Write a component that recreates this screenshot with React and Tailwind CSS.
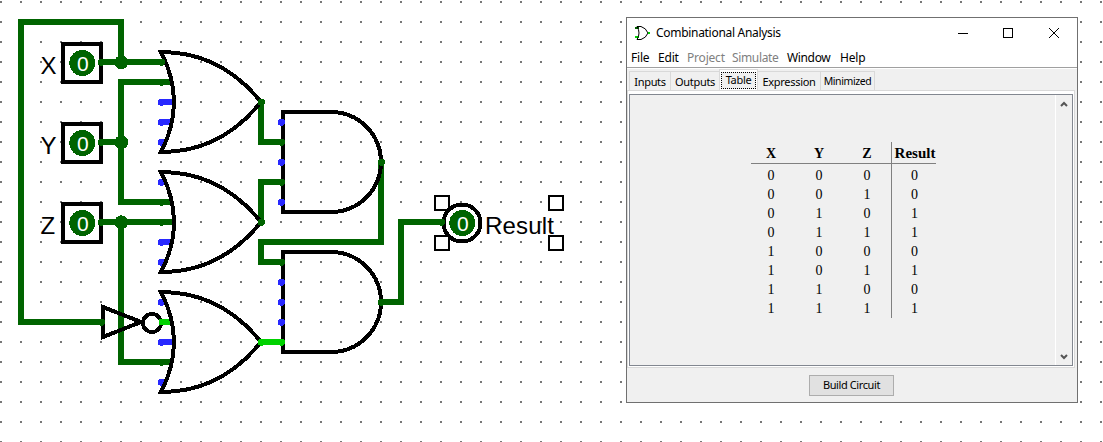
const GREEN = "#006400";
const LIME = "#00d200";
const BLUE = "#2828ff";

function Pin({ x, y, color = GREEN, r = 3.6 }) {
  return <circle cx={x + 0.3} cy={y + 0.2} r={r} fill={color} />;
}

function OrGate({ y, stubs, ports }) {
  return (
    <g>
      {stubs.map(([dy, len]) => (
        <path key={dy} d={`M161 ${y + dy}h${len}`} stroke={BLUE} strokeWidth="6" />
      ))}
      {ports.map((dy) => (
        <Pin key={dy} x={161} y={y + dy} color={BLUE} />
      ))}
      <path
        d={`M261 ${y}Q221 ${y - 50} 161 ${y - 50}Q187 ${y} 161 ${y + 50}Q221 ${y + 50} 261 ${y}Z`}
        fill="none"
        stroke="#000"
        strokeWidth="4"
      />
    </g>
  );
}

function AndGate({ y, ports }) {
  return (
    <g>
      <path
        d={`M331 ${y - 50}H283V${y + 50}H331A50 50 0 0 0 331 ${y - 50}Z`}
        fill="none"
        stroke="#000"
        strokeWidth="4"
      />
      {ports.map((dy) => (
        <Pin key={dy} x={281} y={y + dy} color={BLUE} />
      ))}
    </g>
  );
}

function Value({ x, y }) {
  return (
    <g>
      <circle cx={x + 0.3} cy={y} r="13" fill={GREEN} />
      <text x={x + 0.9} y={y + 8} textAnchor="middle" fontSize="21" fill="#fff">
        0
      </text>
    </g>
  );
}

function InputPin({ y, label }) {
  return (
    <g>
      <rect x="63" y={y - 18} width="38" height="38" fill="none" stroke="#000" strokeWidth="4" />
      <Value x={82} y={y + 1} />
      <Pin x={101} y={y} />
      <text x="40.5" y={y + 12} fontSize="24" fill="#000">
        {label}
      </text>
    </g>
  );
}

const GREEN_PINS = [
  [101, 322], [261, 102], [261, 222], [281, 142], [281, 182], [381, 162], [281, 262],
  [381, 302], [161, 62], [161, 82], [161, 202], [161, 222], [161, 362],
];

function Circuit() {
  return (
    <svg
      width="1103"
      height="442"
      className="block font-['Liberation_Sans',sans-serif]"
      shapeRendering="crispEdges"
    >
      <defs>
        <pattern id="grid" width="20" height="20" patternUnits="userSpaceOnUse">
          <rect x="0" y="1" width="2" height="2" fill="#777" />
        </pattern>
      </defs>
      <rect width="1103" height="442" fill="url(#grid)" />
      <g fill="none" stroke={GREEN} strokeWidth="6">
        <path d="M121 62V22H21V322H104" />
        <path d="M101 62H166" />
        <path d="M101 142H121" />
        <path d="M171 82H121V202H171" />
        <path d="M101 222H173" />
        <path d="M121 222V362H171" />
        <path d="M261 102V142H281" />
        <path d="M261 222V182H281" />
        <path d="M381 162V242H261V262H281" />
        <path d="M381 302H401V222H441" />
      </g>
      <path d="M261 342H281" stroke={LIME} strokeWidth="6" />
      {[62, 142, 222].map((y) => (
        <circle key={y} cx="121.3" cy={y + 0.3} r="7" fill={GREEN} />
      ))}
      <path d="M103 307V337L141 322Z" fill="none" stroke="#000" strokeWidth="4" />
      <circle cx="152" cy="323" r="9" fill="none" stroke="#000" strokeWidth="4" />
      <path d="M159 322H172" stroke={LIME} strokeWidth="6" />
      <OrGate y={102} stubs={[[0, 12], [20, 10]]} ports={[0, 20, 40]} />
      <OrGate y={222} stubs={[[20, 10]]} ports={[-40, 20, 40]} />
      <OrGate y={342} stubs={[[0, 12]]} ports={[-40, 0, 40]} />
      <AndGate y={162} ports={[-40, 0, 40]} />
      <AndGate y={302} ports={[-20, 0, 20]} />
      <InputPin y={62} label="X" />
      <InputPin y={142} label="Y" />
      <InputPin y={222} label="Z" />
      {GREEN_PINS.map(([x, y]) => (
        <Pin key={`${x}-${y}`} x={x} y={y} />
      ))}
      <Pin x={261} y={342} color={LIME} />
      <Pin x={281} y={342} color={LIME} />
      <g fill="#fff" stroke="#000" strokeWidth="2">
        {[[435, 196], [549, 196], [435, 236], [549, 236]].map(([x, y]) => (
          <rect key={`${x}-${y}`} x={x} y={y} width="14" height="14" />
        ))}
      </g>
      <circle cx="462" cy="223" r="18.5" fill="none" stroke="#000" strokeWidth="4" />
      <Value x={462} y={223} />
      <Pin x={441} y={222} />
      <text x="485" y="234" fontSize="24" fill="#000" textLength="69">
        Result
      </text>
    </svg>
  );
}

const ROWS = ["0000", "0010", "0101", "0111", "1000", "1011", "1100", "1111"];

function TruthTable() {
  return (
    <div className="ml-[121px] mt-[47px] h-[176px] w-[185px] overflow-hidden font-['Liberation_Serif',serif] text-[14px] text-black">
      <div className="grid h-[22px] grid-cols-[40px_56px_40px_5px_44px] border-b border-[#808080] text-center font-bold">
        <span className="pt-px">X</span>
        <span className="pt-px">Y</span>
        <span className="pt-px">Z</span>
        <span className="border-r border-[#808080]" />
        <span className="pt-px pl-[2px] text-[15px] leading-[21px]">Result</span>
      </div>
      {ROWS.map((row) => (
        <div key={row} className="grid h-[19px] grid-cols-[40px_56px_40px_5px_44px] text-center leading-[24px]">
          <span>{row[0]}</span>
          <span>{row[1]}</span>
          <span>{row[2]}</span>
          <span className="border-r border-[#808080]" />
          <span className="pl-px">{row[3]}</span>
        </div>
      ))}
    </div>
  );
}

function Chevron({ d }) {
  return (
    <svg width="8" height="6" viewBox="0 0 8 6" fill="none" stroke="#555" strokeWidth="2">
      <path d={d} />
    </svg>
  );
}

function AnalysisWindow() {
  const tab =
    "flex h-[19px] shrink-0 items-center justify-center border border-b-0 border-[#d9d9d9] bg-[#f0f0f0] pt-[2px]";
  return (
    <div className="absolute left-[626px] top-[17px] flex h-[386px] w-[452px] flex-col border border-[#707070] bg-[#f0f0f0] font-['Noto_Sans',sans-serif] text-black">
      <div className="flex h-[30px] shrink-0 items-center bg-white">
        <svg width="17" height="16" viewBox="0 0 17 16" fill="none" className="ml-[7px]" shapeRendering="crispEdges">
          <path d="M1 3H5" stroke="#006400" strokeWidth="2" />
          <path d="M1 12H5" stroke="#00d200" strokeWidth="2" />
          <path
            d="M3 1.5H7Q12 3 14 8Q12 13 7 14.5H3Q7 8 3 1.5Z"
            stroke="#000"
            shapeRendering="geometricPrecision"
          />
          <path d="M14 8H16" stroke="#00d200" strokeWidth="2" />
        </svg>
        <span className="ml-[5px] whitespace-nowrap text-[12px] tracking-[-0.3px]">Combinational Analysis</span>
        <svg width="102" height="12" viewBox="0 0 102 12" fill="none" stroke="#000" className="ml-auto mr-[17px]">
          <path d="M0 6.5H10M45.5 1.5h9v9h-9z" shapeRendering="crispEdges" />
          <path d="M91 1L101 11M101 1L91 11" />
        </svg>
      </div>
      <div className="flex h-[20px] shrink-0 whitespace-nowrap border-b border-[#a0a0a0] bg-white pl-[4px] text-[12px] leading-[20px] tracking-[-0.2px]">
        <span className="w-[27px]">File</span>
        <span className="w-[29px]">Edit</span>
        <span className="w-[45px] text-[#808080]">Project</span>
        <span className="w-[55px] tracking-[-0.35px] text-[#808080]">Simulate</span>
        <span className="w-[53px] tracking-[-0.35px]">Window</span>
        <span>Help</span>
      </div>
      <div className="flex h-[22px] shrink-0 items-end border-t border-white pl-[2px] text-[11px] tracking-[-0.3px]">
        <div className={`${tab} w-[42px]`}>Inputs</div>
        <div className={`${tab} w-[48px] border-x-0`}>Outputs</div>
        <div className="flex h-[21px] w-[39px] shrink-0 items-start justify-center border border-b-0 border-[#d9d9d9] bg-white pt-[2px]">
          <span className="flex h-[17px] w-[35px] items-center justify-center border border-dotted border-black bg-[#f0f0f0]">
            Table
          </span>
        </div>
        <div className={`${tab} w-[63px] border-l-0`}>Expression</div>
        <div className={`${tab} w-[54px] border-l-0 text-[10.5px] tracking-[-0.4px]`}>Minimized</div>
      </div>
      <div className="mr-[2px] flex h-[278px] shrink-0 border border-[#d9d9d9] bg-white pb-px pl-px pr-px pt-[3px]">
        <div className="flex w-full border border-[#828790] bg-[#f0f0f0]">
          <div className="grow">
            <TruthTable />
          </div>
          <div className="flex w-[17px] flex-col items-center justify-between border-l border-white pb-[5px] pt-[6px]">
            <Chevron d="M1 5L4 2L7 5" />
            <Chevron d="M1 1L4 4L7 1" />
          </div>
        </div>
      </div>
      <div className="flex justify-center pt-[7px]">
        <div className="ml-[-1px] flex h-[21px] w-[85px] items-center justify-center border border-[#adadad] bg-[#e1e1e1] text-[11px] tracking-[-0.4px]">
          Build Circuit
        </div>
      </div>
    </div>
  );
}

export default function App() {
  return (
    <main className="relative h-[442px] w-[1103px] overflow-hidden bg-white">
      <Circuit />
      <AnalysisWindow />
    </main>
  );
}
